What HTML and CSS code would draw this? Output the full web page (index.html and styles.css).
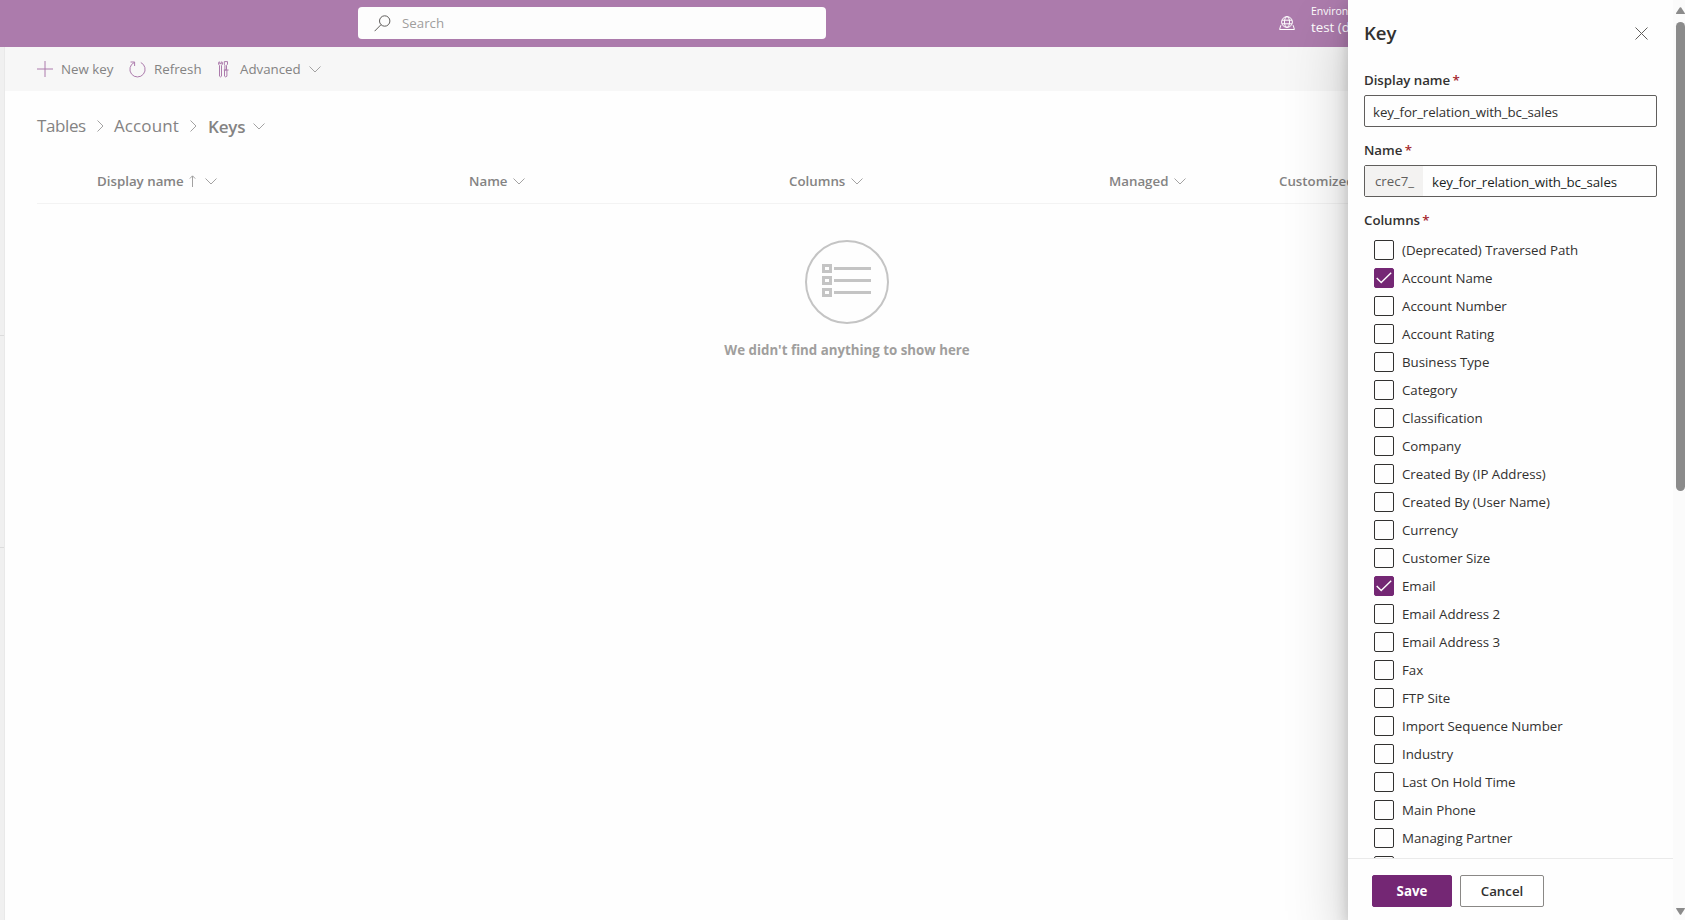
FILE: index.html
```html
<!DOCTYPE html>
<html lang="en">
<head>
    <meta charset="UTF-8">
    <meta name="viewport" content="width=device-width, initial-scale=1.0">
    <title>Keys - Power Apps</title>
    <link rel="stylesheet" href="styles.css">
</head>
<body>
    <!-- Shared icons -->
    <svg class="icon-defs" width="0" height="0">
        <symbol id="chevron" viewBox="0 0 12 7"><path d="M.5 .5 6 6 11.5 .5"/></symbol>
        <symbol id="chevron-right" viewBox="0 0 7 12"><path d="M.5 .5 6 6 .5 11.5"/></symbol>
        <symbol id="check" viewBox="0 0 16 12"><path d="M.7 6 5.2 10.5 15.2 .8"/></symbol>
    </svg>

    <!-- Top bar -->
    <header class="topbar">
        <div class="search">
            <svg class="search-icon" width="17" height="17" viewBox="0 0 17 17"><circle cx="10.7" cy="6" r="5.2"/><path d="M7 9.7 .6 16.2"/></svg>
            <span>Search</span>
        </div>
        <div class="environment">
            <svg class="env-icon" width="16" height="15" viewBox="0 0 16 15">
                <circle cx="8" cy="6" r="5.4"/><ellipse cx="8" cy="6" rx="2.5" ry="5.4"/>
                <path d="M3 4.2H13M3 7.8H13M2.2 9.5H1.7L.6 13.5H15.4L14.3 9.5H13.8"/>
            </svg>
            <div>
                <div class="env-label">Environment</div>
                <div class="env-name">test (default)</div>
            </div>
        </div>
    </header>

    <div class="page">
        <aside class="rail">
            <div class="rail-line"></div>
            <div class="rail-line"></div>
        </aside>
        <main class="main">
            <div class="commands">
                <div class="command new-key">
                    <svg class="purple" width="16" height="16" viewBox="0 0 16 16"><path d="M8 0V16M0 8H16"/></svg>
                    <span>New key</span>
                </div>
                <div class="command refresh">
                    <svg class="purple" width="17" height="17" viewBox="0 0 17 17"><path d="M11.8 1.5A7.6 7.6 0 1 1 5.2 1.5M1.5 1H5.6V5"/></svg>
                    <span>Refresh</span>
                </div>
                <div class="command advanced">
                    <svg class="purple tools" width="11" height="17" viewBox="0 0 11 17">
                        <path d="M1.2 .6 .6 1.4V3.2L1.5 4.4V15.2Q2.5 16.6 3.5 15.2V4.4L4.4 3.2V1.4L3.8 .6M1.7 .8V2.6H3.3V.8"/>
                        <path d="M6.3 .6H9.5V3.2L8.5 4.4V9H6.9V4.4L6.3 3.2ZM5.8 9H10.6M6.5 9V15.2Q7.7 16.6 8.9 15.2V9"/>
                    </svg>
                    <span>Advanced</span>
                    <svg class="chevron" width="12" height="7"><use href="#chevron"/></svg>
                </div>
            </div>

            <nav class="breadcrumb">
                <span class="crumb-tables">Tables</span>
                <svg class="chevron" width="7" height="12"><use href="#chevron-right"/></svg>
                <span class="crumb-account">Account</span>
                <svg class="chevron" width="7" height="12"><use href="#chevron-right"/></svg>
                <span class="current">Keys</span>
                <svg class="chevron" width="12" height="7"><use href="#chevron"/></svg>
            </nav>

            <div class="list-header">
                <div class="column">Display name
                    <svg class="sort" width="7" height="12" viewBox="0 0 7 12"><path d="M3.5 12V1M.8 3.6 3.5 .8 6.2 3.6"/></svg>
                    <svg class="chevron" width="12" height="7"><use href="#chevron"/></svg>
                </div>
                <div class="column">Name <svg class="chevron" width="12" height="7"><use href="#chevron"/></svg></div>
                <div class="column">Columns <svg class="chevron" width="12" height="7"><use href="#chevron"/></svg></div>
                <div class="column">Managed <svg class="chevron" width="12" height="7"><use href="#chevron"/></svg></div>
                <div class="column">Customized</div>
            </div>

            <div class="empty">
                <div class="empty-circle">
                    <svg width="49" height="33" viewBox="0 0 49 33">
                        <path class="boxes" d="M1.5 1.5H8.5V7.5H1.5ZM1.5 13.5H8.5V19.5H1.5ZM1.5 25.5H8.5V31.5H1.5Z"/>
                        <path class="lines" d="M12 4.5H49M12 16.5H49M12 28.5H49"/>
                    </svg>
                </div>
                <p>We didn't find anything to show here</p>
            </div>
        </main>
    </div>

    <!-- Key panel -->
    <section class="panel">
        <div class="panel-body">
            <div class="panel-title">
                <h1>Key</h1>
                <svg class="close" width="13" height="13" viewBox="0 0 13 13"><path d="M.5 .5 12.5 12.5M12.5 .5 .5 12.5"/></svg>
            </div>
            <div class="label">Display name <span class="required">*</span></div>
            <div class="field"><span class="value">key_for_relation_with_bc_sales</span></div>
            <div class="label">Name <span class="required">*</span></div>
            <div class="field dark"><span class="prefix">crec7_</span><span class="value">key_for_relation_with_bc_sales</span></div>
            <div class="label">Columns <span class="required">*</span></div>
            <div class="options" id="options"></div>
        </div>
        <div class="panel-footer">
            <button class="primary">Save</button>
            <button class="secondary">Cancel</button>
        </div>
    </section>

    <div class="scrollbar">
        <svg width="9" height="7" viewBox="0 0 9 7"><path d="M0 6.5Q0 6 3.8 .6Q4.5 -.2 5.2 .6L9 6.5Q9 7 8.5 7H.5Q0 7 0 6.5Z"/></svg>
        <div class="thumb"></div>
        <svg class="down" width="9" height="7" viewBox="0 0 9 7"><path d="M0 .5Q0 0 .5 0H8.5Q9 0 9 .5L5.2 6.4Q4.5 7.2 3.8 6.4Z"/></svg>
    </div>

    <script>
        const columns = [
            "(Deprecated) Traversed Path", "Account Name", "Account Number", "Account Rating",
            "Business Type", "Category", "Classification", "Company", "Created By (IP Address)",
            "Created By (User Name)", "Currency", "Customer Size", "Email", "Email Address 2",
            "Email Address 3", "Fax", "FTP Site", "Import Sequence Number", "Industry",
            "Last On Hold Time", "Main Phone", "Managing Partner", ""
        ];
        const selected = ["Account Name", "Email"];

        document.getElementById('options').innerHTML = columns.map(name => {
            const checked = selected.includes(name);
            return `
                <div class="option">
                    <span class="box ${checked ? 'checked' : ''}">
                        ${checked ? '<svg width="16" height="12"><use href="#check"/></svg>' : ''}
                    </span>
                    <span>${name}</span>
                </div>`;
        }).join('');
    </script>
</body>
</html>
```
FILE: styles.css
```css
/* Main Styles */
* {
    box-sizing: border-box;
}
body {
    margin: 0;
    height: 920px;
    overflow: hidden;
    font-family: "Open Sans", "Noto Sans", sans-serif;
    font-size: 13.3px;
    line-height: 20px;
    color: #323130;
    background-color: #fefefe;
}
svg {
    display: block;
    flex: none;
    fill: none;
    stroke: currentColor;
}
.icon-defs {
    position: absolute;
}

/* Top Bar */
.topbar {
    display: flex;
    height: 47px;
    padding: 7px 0 0 358px;
    background-color: #ac7bac;
}
.search {
    display: flex;
    align-items: center;
    gap: 11px;
    width: 468px;
    height: 32px;
    padding-left: 16px;
    border-radius: 4px;
    background-color: #fdfdfd;
    color: #a09e9d;
}
.search-icon {
    color: #605e5c;
}
.environment {
    display: flex;
    gap: 16px;
    margin-left: 453px;
    color: white;
    white-space: nowrap;
}
.env-icon {
    margin-top: 9px;
}
.env-label {
    margin-top: -4px;
    font-size: 10.5px;
    line-height: 16px;
}
.env-name {
    line-height: 16px;
}

/* Page */
.page {
    display: flex;
    height: 873px;
}
.rail {
    width: 5px;
    padding-top: 288px;
    background-color: #f0f0f0;
    border-right: 1px solid #e9e9e9;
}
.rail-line {
    height: 1px;
    margin-bottom: 211px;
    background-color: #dcdcdc;
}
.main {
    flex: 1;
    min-width: 0;
}
.commands {
    display: flex;
    align-items: center;
    height: 44px;
    padding-left: 32px;
    background-color: #f7f7f7;
    color: #848383;
}
.command {
    display: flex;
    align-items: center;
    gap: 8px;
    height: 20px;
}
.new-key {
    width: 92px;
}
.refresh {
    width: 89px;
}
.advanced .tools {
    margin-right: 3px;
}
.purple {
    color: #ac7bac;
}
.chevron {
    color: #a3a2a2;
}

/* Breadcrumb */
.breadcrumb {
    display: flex;
    align-items: center;
    height: 24px;
    margin: 23px 0 0 32px;
    gap: 10px;
    font-size: 17px;
    color: #848383;
}
.crumb-tables {
    width: 50px;
    letter-spacing: -0.4px;
}
.crumb-account {
    width: 66px;
    letter-spacing: 0.1px;
}
.breadcrumb .current {
    width: 35px;
    margin: 2px 0 0 1px;
    font-weight: 600;
    letter-spacing: -0.2px;
}

/* List */
.list-header {
    display: grid;
    grid-template-columns: 372px 320px 320px 170px 1fr;
    height: 66px;
    margin-left: 32px;
    padding: 33px 0 0 60px;
    border-bottom: 1px solid #f3f3f3;
    color: #848383;
    font-weight: 600;
}
.column {
    display: flex;
    align-items: center;
    gap: 6px;
    height: 20px;
}
.sort {
    color: #a3a2a2;
    margin: 0 3px 0 -1px;
}
.empty {
    display: flex;
    flex-direction: column;
    align-items: center;
    width: 1620px;
    margin-left: 32px;
    padding-top: 36px;
    color: #a09e9d;
    font-weight: 700;
}
.empty-circle {
    display: flex;
    align-items: center;
    justify-content: center;
    width: 84px;
    height: 84px;
    padding: 0 1px 3px 0;
    border: 2px solid #c4c4c4;
    border-radius: 50%;
    color: #c4c4c4;
}
.boxes, .lines {
    stroke-width: 3;
}
.empty p {
    margin: 16px 0 0;
}

/* Key Panel */
.panel {
    position: absolute;
    top: 0;
    left: 1348px;
    display: flex;
    flex-direction: column;
    width: 337px;
    height: 920px;
    background-color: #fefefe;
    box-shadow: 0 25.6px 57.6px rgba(0,0,0,0.22), 0 4.8px 14.4px rgba(0,0,0,0.18);
}
.panel-body {
    height: 858px;
    overflow: hidden;
    padding: 18px 28px 0 16px;
}
.panel-title {
    display: flex;
    justify-content: space-between;
    padding-right: 9px;
    height: 52px;
}
.panel-title h1 {
    margin: 1px 0 0;
    font-size: 18.6px;
    line-height: 28px;
    font-weight: 600;
}
.close {
    margin-top: 9px;
    color: #605e5c;
}
.label {
    height: 25px;
    font-weight: 600;
    letter-spacing: -0.05px;
}
.required {
    margin-left: -1px;
    color: #a4262c;
}
.field {
    display: flex;
    align-items: center;
    height: 32px;
    margin-bottom: 13px;
    border: 1px solid #605e5c;
    border-radius: 2px;
}
.value {
    padding: 1px 8px 0;
    letter-spacing: -0.1px;
}
.dark {
    color: #201f1e;
}
.prefix {
    width: 58px;
    height: 30px;
    margin-right: 1px;
    padding-left: 10px;
    line-height: 30px;
    background-color: #f3f2f1;
    color: #605e5c;
}
.option {
    display: flex;
    align-items: center;
    gap: 8px;
    height: 20px;
    margin: 0 0 8px 10px;
    letter-spacing: -0.03px;
}
.options {
    padding-top: 5px;
}
.box {
    display: flex;
    align-items: center;
    justify-content: center;
    width: 20px;
    height: 20px;
    border: 1px solid #323130;
    border-radius: 2px;
}
.checked {
    border-color: #742774;
    background-color: #742774;
    color: white;
    stroke-width: 1.4;
}
.panel-footer {
    display: flex;
    gap: 8px;
    width: 325px;
    height: 62px;
    padding: 16px 24px;
    border-top: 1px solid #eaeaea;
}
button {
    height: 32px;
    padding: 0;
    border-radius: 2px;
    font-family: inherit;
    font-size: 13.3px;
    font-weight: 600;
}
.primary {
    width: 80px;
    border: 1px solid #742774;
    background-color: #742774;
    color: white;
    font-weight: 700;
}
.secondary {
    width: 84px;
    border: 1px solid #8a8886;
    background-color: white;
    color: #323130;
}

/* Scrollbar */
.scrollbar {
    position: absolute;
    top: 0;
    left: 1673px;
    display: flex;
    flex-direction: column;
    width: 12px;
    height: 920px;
    padding: 7px 0 5px 3px;
    background-color: #fbfbfb;
}
.scrollbar svg {
    fill: #8b8b8b;
    stroke: none;
}
.thumb {
    width: 9px;
    height: 469px;
    margin-top: 8px;
    border-radius: 5px;
    background-color: #8b8b8b;
}
.down {
    margin-top: auto;
}
```
